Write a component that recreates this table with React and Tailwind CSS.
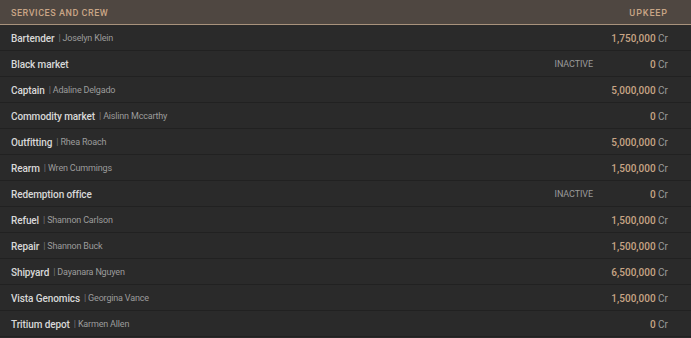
const rows = [
  { name: "Bartender", crew: "Joselyn Klein", upkeep: "1,750,000" },
  { name: "Black market", inactive: true, upkeep: "0" },
  { name: "Captain", crew: "Adaline Delgado", upkeep: "5,000,000" },
  { name: "Commodity market", crew: "Aislinn Mccarthy", upkeep: "0" },
  { name: "Outfitting", crew: "Rhea Roach", upkeep: "5,000,000" },
  { name: "Rearm", crew: "Wren Cummings", upkeep: "1,500,000" },
  { name: "Redemption office", inactive: true, upkeep: "0" },
  { name: "Refuel", crew: "Shannon Carlson", upkeep: "1,500,000" },
  { name: "Repair", crew: "Shannon Buck", upkeep: "1,500,000" },
  { name: "Shipyard", crew: "Dayanara Nguyen", upkeep: "6,500,000" },
  { name: "Vista Genomics", crew: "Georgina Vance", upkeep: "1,500,000" },
  { name: "Tritium depot", crew: "Karmen Allen", upkeep: "0" },
];

export default function App() {
  return (
    <div className="w-[691px] h-[338px] overflow-hidden bg-[#2a2a2a] font-['Roboto',sans-serif]">
      {/* header */}
      <div className="h-[25px] flex items-center justify-between pl-[11px] pr-[23px] pt-[3px] bg-[#4f4741] border-b border-[#a8927c]">
        <span className="text-[9px] font-medium tracking-[0.06em] text-[#c9a586]">SERVICES AND CREW</span>
        <span className="text-[9px] font-medium tracking-[0.1em] text-[#c9a586]">UPKEEP</span>
      </div>

      {rows.map((r) => (
        <div
          key={r.name}
          className="h-[26px] flex items-center pl-[11px] pr-[23px] pt-[2px] border-b border-[#212121] bg-[#2a2a2a]"
        >
          <div className="flex-1 flex items-center">
            <span className="text-[10px] font-medium text-[#d8d8d8] tracking-[-0.01em]">{r.name}</span>
            {r.crew && (
              <span className="text-[9px] text-[#9c9c9c] ml-[4px] tracking-[-0.02em]">
                <span className="text-[#777]">|</span> {r.crew}
              </span>
            )}
          </div>
          {r.inactive && (
            <span className="text-[9px] text-[#9a9a9a] tracking-[-0.01em]">INACTIVE</span>
          )}
          <div className="w-[75px] text-right text-[10px]">
            <span className="text-[#c8a585] font-medium">{r.upkeep}</span>
            <span className="text-[#9c9c9c]"> Cr</span>
          </div>
        </div>
      ))}
    </div>
  );
}
